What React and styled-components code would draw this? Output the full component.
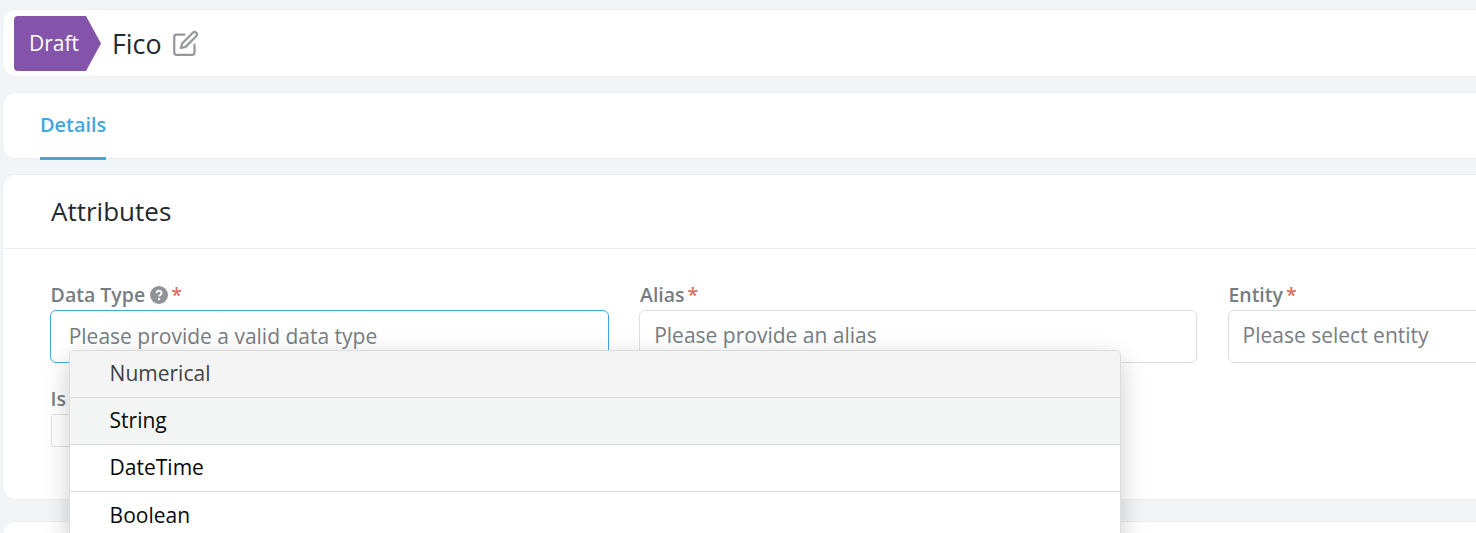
import React from "react";
import styled, { createGlobalStyle } from "styled-components";
import { FiEdit } from "react-icons/fi";

const GlobalStyle = createGlobalStyle`
  *, *::before, *::after { box-sizing: border-box; }
  html, body { margin: 0; height: 533px; overflow: hidden; }
  body {
    background: #f1f5f8;
    color: #222a30;
    font-family: "Open Sans", "Noto Sans", sans-serif;
  }
`;

const Page = styled.main`
  width: 1520px;
  height: 533px;
  padding: 9px 0 0 2px;
  overflow: hidden;
`;

const Card = styled.section`
  height: ${(p) => p.$height}px;
  margin-bottom: ${(p) => p.$gap}px;
  background: #fff;
  border: 1px solid #eceeef;
  border-radius: 13px;
`;

const TitleCard = styled(Card)`
  display: flex;
  align-items: flex-start;
  padding: 6px 11px;
`;

const StatusBadge = styled.div`
  width: 87px;
  height: 55px;
  padding-left: 15px;
  background: #8454ab;
  border-radius: 4px 0 0 4px;
  clip-path: polygon(0 0, 72px 0, 100% 50%, 72px 100%, 0 100%);
  color: #fff;
  font-size: 21px;
  line-height: 55px;
`;

const RecordName = styled.h1`
  margin: 0 10.5px 0 11px;
  font-size: 26.8px;
  font-weight: 400;
  line-height: 56px;
`;

const EditIcon = styled(FiEdit)`
  width: 27px;
  height: 27px;
  margin-top: 14px;
  color: #96989b;
`;

const TabCard = styled(Card)`
  display: flex;
  padding-left: 37px;
`;

const Tab = styled.a`
  height: 67px;
  border-bottom: 3px solid #40a7df;
  color: #40a7df;
  font-size: 19.9px;
  font-weight: 600;
  line-height: 63px;
`;

const CardHeader = styled.h2`
  height: 74px;
  margin: 0;
  padding-left: 48px;
  border-bottom: 1px solid #eaecee;
  font-size: 26px;
  font-weight: 400;
  line-height: 73px;
`;

const Form = styled.form`
  display: grid;
  grid-template-columns: 559px 558px 559px;
  column-gap: 30.4px;
  row-gap: 23px;
  padding: 33px 0 0 47px;
`;

const Field = styled.div`
  position: relative;
  color: #777d82;
`;

const Label = styled.label`
  display: flex;
  align-items: center;
  height: 28px;
  padding: 0 0 2px 0.6px;
  font-size: 19.5px;
  font-weight: 600;
  line-height: 26px;
`;

const Required = styled.span`
  margin-left: 3px;
  color: #dc6b5e;
`;

const HelpIcon = styled.svg`
  width: 18px;
  height: 18px;
  margin: 0 0.5px 0 4.5px;
`;

const Input = styled.div`
  height: 53px;
  padding-left: ${(p) => (p.$active ? 17.7 : 13.8)}px;
  border: 1px solid ${(p) => (p.$active ? "#40a7df" : "#dcdddf")};
  border-radius: 6px;
  font-size: 21px;
  line-height: ${(p) => (p.$active ? 50 : 48)}px;
  white-space: nowrap;
`;

const Toggle = styled.div`
  width: 80px;
  height: 33px;
  margin: 0 0 0 1px;
  border: 1px solid #dcdddf;
  border-radius: 3px;
`;

const Menu = styled.ul`
  position: absolute;
  top: 68px;
  left: 19px;
  width: 1052px;
  height: 220px;
  margin: 0;
  padding: 0;
  overflow: hidden;
  list-style: none;
  background: #fff;
  border: 1px solid #dadcdd;
  border-radius: 5px;
  box-shadow: 0 8px 26px rgba(0, 0, 0, 0.2);
  z-index: 2;
`;

const Option = styled.li`
  height: 47px;
  padding-left: 39.6px;
  background: ${(p) => p.$background || "#fff"};
  border-bottom: 1px solid #dadcdd;
  color: ${(p) => p.$color || "#080808"};
  font-size: 21px;
  line-height: 45px;

  &:last-child {
    line-height: 47px;
  }
`;

function Help() {
  return (
    <HelpIcon viewBox="0 0 18 18" fill="none">
      <circle cx="9" cy="9" r="9" fill="#929396" />
      <path d="M6.5 7.1a2.5 2.3 0 1 1 3.9 1.8C9.5 9.4 9.1 9.7 9.1 10.6" stroke="#fff" strokeWidth="1.9" />
      <circle cx="9.1" cy="13.1" r="1.2" fill="#fff" />
    </HelpIcon>
  );
}

export default function App() {
  return (
    <Page>
      <GlobalStyle />
      <TitleCard $height={68} $gap={15}>
        <StatusBadge>Draft</StatusBadge>
        <RecordName>Fico</RecordName>
        <EditIcon />
      </TitleCard>
      <TabCard $height={67} $gap={15}>
        <Tab>Details</Tab>
      </TabCard>
      <Card $height={326} $gap={21}>
        <CardHeader>Attributes</CardHeader>
        <Form>
          <Field>
            <Label>Data Type<Help /><Required>*</Required></Label>
            <Input $active>Please provide a valid data type</Input>
            <Menu>
              <Option $background="#f4f4f4" $color="#414141">Numerical</Option>
              <Option $background="#f3f5f4">String</Option>
              <Option>DateTime</Option>
              <Option>Boolean</Option>
            </Menu>
          </Field>
          <Field>
            <Label>Alias<Required>*</Required></Label>
            <Input>Please provide an alias</Input>
          </Field>
          <Field>
            <Label>Entity<Required>*</Required></Label>
            <Input>Please select entity</Input>
          </Field>
          <Field>
            <Label>Is</Label>
            <Toggle />
          </Field>
        </Form>
      </Card>
      <Card $height={60} $gap={0} />
    </Page>
  );
}
